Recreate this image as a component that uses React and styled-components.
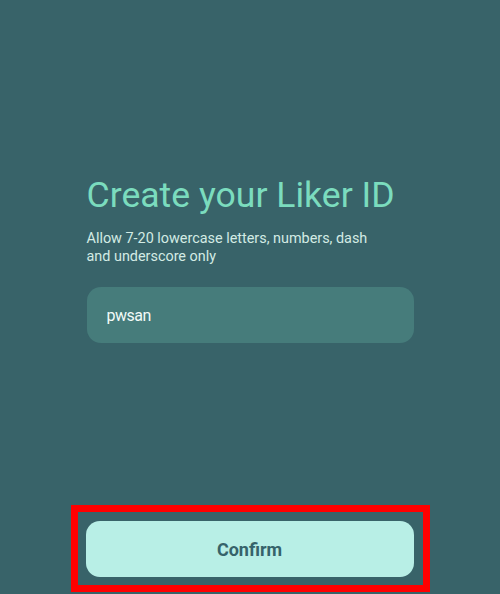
import React from "react";
import styled, { createGlobalStyle } from "styled-components";

const Global = createGlobalStyle`
  html, body { margin: 0; padding: 0; background: #386369; }
  body { font-family: Roboto, "Noto Sans", sans-serif; }
  * { box-sizing: border-box; }
`;

const Page = styled.div`
  width: 500px;
  height: 594px;
  background: #386369;
  display: flex;
  flex-direction: column;
  align-items: center;
  padding-top: 175px;
`;

const Column = styled.div`
  width: 327px;
  display: flex;
  flex-direction: column;
  flex: 1;
`;

const Title = styled.h1`
  margin: 0;
  font-size: 35.6px;
  font-weight: 400;
  line-height: 41px;
  color: #7bdcbe;
  white-space: nowrap;
`;

const Subtitle = styled.p`
  margin: 14px 0 0;
  font-size: 14.4px;
  line-height: 18px;
  color: #d3ebe4;
`;

const Input = styled.div`
  margin-top: 21px;
  height: 56px;
  border-radius: 14px;
  background: #467c7b;
  display: flex;
  align-items: center;
  padding-left: 20px;
  color: #f2faf8;
  font-size: 16px;
  letter-spacing: -0.5px;
`;

const Spacer = styled.div`
  flex: 1;
`;

const Highlight = styled.div`
  align-self: center;
  width: 359px;
  margin-bottom: 2px;
  border: 7px solid #ff0000;
  padding: 9px 9px 8px 8px;
`;

const Button = styled.button`
  display: block;
  width: 328px;
  height: 56px;
  border: none;
  border-radius: 14px;
  background: #b8efe6;
  color: #36636a;
  font-family: Roboto, "Noto Sans", sans-serif;
  font-size: 18px;
  font-weight: 700;
  cursor: pointer;
`;

export default function App() {
  return (
    <>
      <Global />
      <Page>
        <Column>
          <Title>Create your Liker ID</Title>
          <Subtitle>
            Allow 7-20 lowercase letters, numbers, dash
            <br />
            and underscore only
          </Subtitle>
          <Input>pwsan</Input>
          <Spacer />
          <Highlight>
            <Button>Confirm</Button>
          </Highlight>
        </Column>
      </Page>
    </>
  );
}
